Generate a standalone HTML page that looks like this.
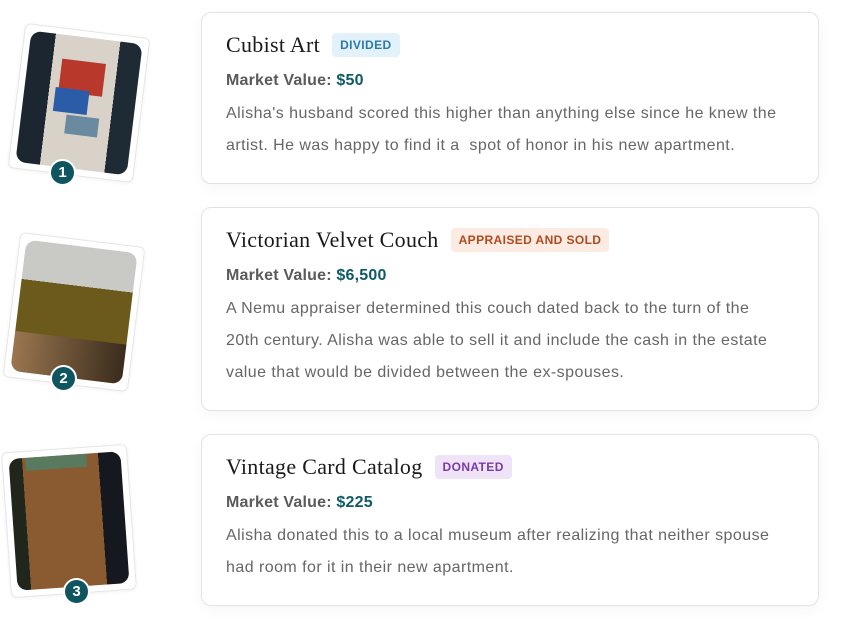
<!DOCTYPE html>
<html><head><style>
*{box-sizing:border-box;margin:0;padding:0}
body{width:844px;height:642px;background:#fff;font-family:"Liberation Sans",sans-serif;position:relative;overflow:hidden}
.card{position:absolute;left:201px;width:618px;border:1px solid #e3e3e3;border-radius:10px;background:#fff;box-shadow:0 4px 14px rgba(0,0,0,0.04);padding:0 24px}
.title{display:flex;align-items:center;margin-top:19px;height:26px}
.title h2{font-family:"Liberation Serif",serif;font-weight:normal;font-size:22px;color:#1a1a1a;letter-spacing:0.3px}
.tag{margin-left:12px;font-size:12px;font-weight:bold;padding:5px 8px;border-radius:4px;letter-spacing:0.4px}
.mv{margin-top:14px;font-size:16px;font-weight:bold;color:#5a5a5a;letter-spacing:0.2px}
.mv span{color:#0f5a66}
.body{margin-top:8px;font-size:16px;line-height:32px;color:#666;letter-spacing:0.45px;white-space:nowrap}
.frame{position:absolute;width:126px;height:146px;background:#fff;border:1px solid #e6e6e6;border-radius:6px;box-shadow:0 1px 4px rgba(0,0,0,0.05)}
.img{position:absolute;left:6px;top:6px;right:6px;bottom:6px;border-radius:10px;overflow:hidden}
.num{position:absolute;width:27px;height:27px;border-radius:50%;background:#0e5560;border:2px solid #fff;color:#fff;font-weight:bold;font-size:15px;text-align:center;line-height:23px}
</style></head><body>

<div class="frame" style="left:16px;top:30px;transform:rotate(7deg)">
 <div class="img" style="background:linear-gradient(90deg,#1c2630 0 22%,#d8d2c8 22% 80%,#1e2a34 80%)">
  <div style="position:absolute;left:30%;top:18%;width:40%;height:25%;background:#b8392c"></div>
  <div style="position:absolute;left:28%;top:40%;width:30%;height:18%;background:#2a5ca8"></div>
  <div style="position:absolute;left:40%;top:60%;width:30%;height:14%;background:#6a8aa0"></div>
 </div>
</div>
<div class="num" style="left:49px;top:159px">1</div>

<div class="frame" style="left:11px;top:239px;transform:rotate(7deg)">
 <div class="img" style="background:linear-gradient(180deg,#c9c9c6 0 30%,#6b5a1c 30% 70%,#8a6a48 70%)">
  <div style="position:absolute;left:0;top:70%;width:100%;height:30%;background:linear-gradient(90deg,#9a7650,#3a2c1c)"></div>
 </div>
</div>
<div class="num" style="left:50px;top:365px">2</div>

<div class="frame" style="left:6px;top:448px;transform:rotate(-4deg)">
 <div class="img" style="background:linear-gradient(90deg,#20261c 0 12%,#8a5a30 12% 80%,#15181e 80%)">
  <div style="position:absolute;left:15%;top:0;width:55%;height:10%;background:#5a7a60"></div>
 </div>
</div>
<div class="num" style="left:63px;top:578px">3</div>

<div class="card" style="top:12px;height:172px">
 <div class="title"><h2>Cubist Art</h2><span class="tag" style="background:#e3f2fa;color:#2a7aa8">DIVIDED</span></div>
 <div class="mv">Market Value: <span>$50</span></div>
 <div class="body">Alisha's husband scored this higher than anything else since he knew the<br>artist. He was happy to find it a &nbsp;spot of honor in his new apartment.</div>
</div>

<div class="card" style="top:207px;height:204px">
 <div class="title"><h2>Victorian Velvet Couch</h2><span class="tag" style="background:#fbebe3;color:#b04a1e">APPRAISED AND SOLD</span></div>
 <div class="mv">Market Value: <span>$6,500</span></div>
 <div class="body">A Nemu appraiser determined this couch dated back to the turn of the<br>20th century. Alisha was able to sell it and include the cash in the estate<br>value that would be divided between the ex-spouses.</div>
</div>

<div class="card" style="top:434px;height:172px">
 <div class="title"><h2>Vintage Card Catalog</h2><span class="tag" style="background:#efe4f7;color:#7a3aa8">DONATED</span></div>
 <div class="mv">Market Value: <span>$225</span></div>
 <div class="body">Alisha donated this to a local museum after realizing that neither spouse<br>had room for it in their new apartment.</div>
</div>

</body></html>
